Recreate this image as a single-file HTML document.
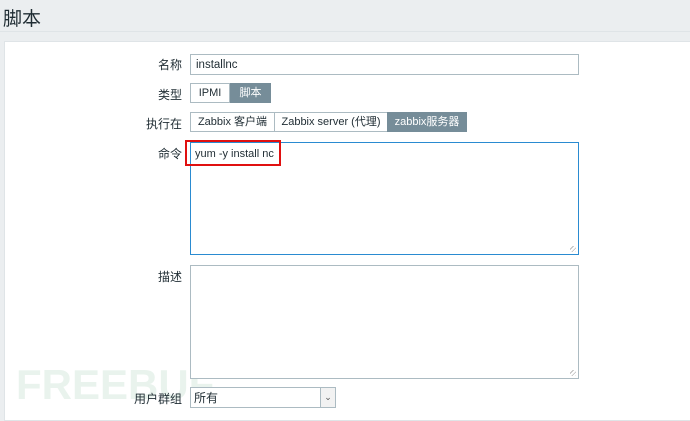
<!DOCTYPE html>
<html><head><meta charset="utf-8"><style>
*{box-sizing:border-box;margin:0;padding:0}
body{width:690px;height:414px;overflow:hidden;background:#ebeef0;font-family:"Liberation Sans","Noto Sans CJK SC",sans-serif;font-size:12px;color:#1f2c33;position:relative}
.h{position:absolute;left:3px;top:4px;font-size:19px;color:#1f2c33}
.line{position:absolute;left:0;top:31px;width:690px;height:1px;background:#dfe4e7}
.panel{position:absolute;left:4px;top:41px;width:690px;height:380px;background:#fff;border:1px solid #dfe4e7}
.lab{position:absolute;right:508px;font-size:12px;text-align:right}
.box{position:absolute;border:1px solid #acbbc2;background:#fff}
.btn{position:absolute;height:20px;border:1px solid #acbbc2;background:#fff;font-size:11px;line-height:19px;text-align:center;color:#1f2c33;white-space:nowrap}
.on{background:#768d99;color:#fff;border-color:#768d99}
.grip{position:absolute;right:2px;bottom:2px;width:6px;height:6px;background:repeating-linear-gradient(135deg,transparent 0 2px,#bbb 2px 3px)}
</style></head><body>
<div class="h">脚本</div>
<div class="line"></div>
<div class="panel"></div>
<div style="position:absolute;left:16px;top:362px;font-size:42px;font-weight:bold;color:#e9f3ed;line-height:46px">FREEBUF</div>
<div class="lab" style="top:56px">名称</div>
<div class="box" style="left:190px;top:54px;width:389px;height:21px;padding:3px 5px;font-size:11.5px;line-height:15px">installnc</div>
<div class="lab" style="top:86px">类型</div>
<div class="btn" style="left:190px;top:83px;width:40px">IPMI</div>
<div class="btn on" style="left:230px;top:83px;width:41px">脚本</div>
<div class="lab" style="top:115px">执行在</div>
<div class="btn" style="left:190px;top:112px;width:85px">Zabbix 客户端</div>
<div class="btn" style="left:274px;top:112px;width:114px">Zabbix server (代理)</div>
<div class="btn on" style="left:387px;top:112px;width:80px">zabbix服务器</div>
<div class="lab" style="top:145px">命令</div>
<div class="box" style="left:190px;top:142px;width:389px;height:113px;border-color:#2a8bd1"><div class="grip"></div></div>
<div style="position:absolute;left:195px;top:148px;font-size:11px">yum -y install nc</div>
<div style="position:absolute;left:185px;top:140px;width:96px;height:26px;border:2px solid #e01010"></div>
<div class="lab" style="top:268px">描述</div>
<div class="box" style="left:190px;top:265px;width:389px;height:114px"><div class="grip"></div></div>
<div class="lab" style="top:390px">用户群组</div>
<div class="box" style="left:190px;top:387px;width:146px;height:21px;padding:3px 3px;line-height:15px">所有<div style="position:absolute;right:0;top:0;width:15px;height:19px;border-left:1px solid #acbbc2;background:#f2f2f2;font-size:9px;text-align:center;line-height:19px;color:#555">&#8964;</div></div>
</body></html>
